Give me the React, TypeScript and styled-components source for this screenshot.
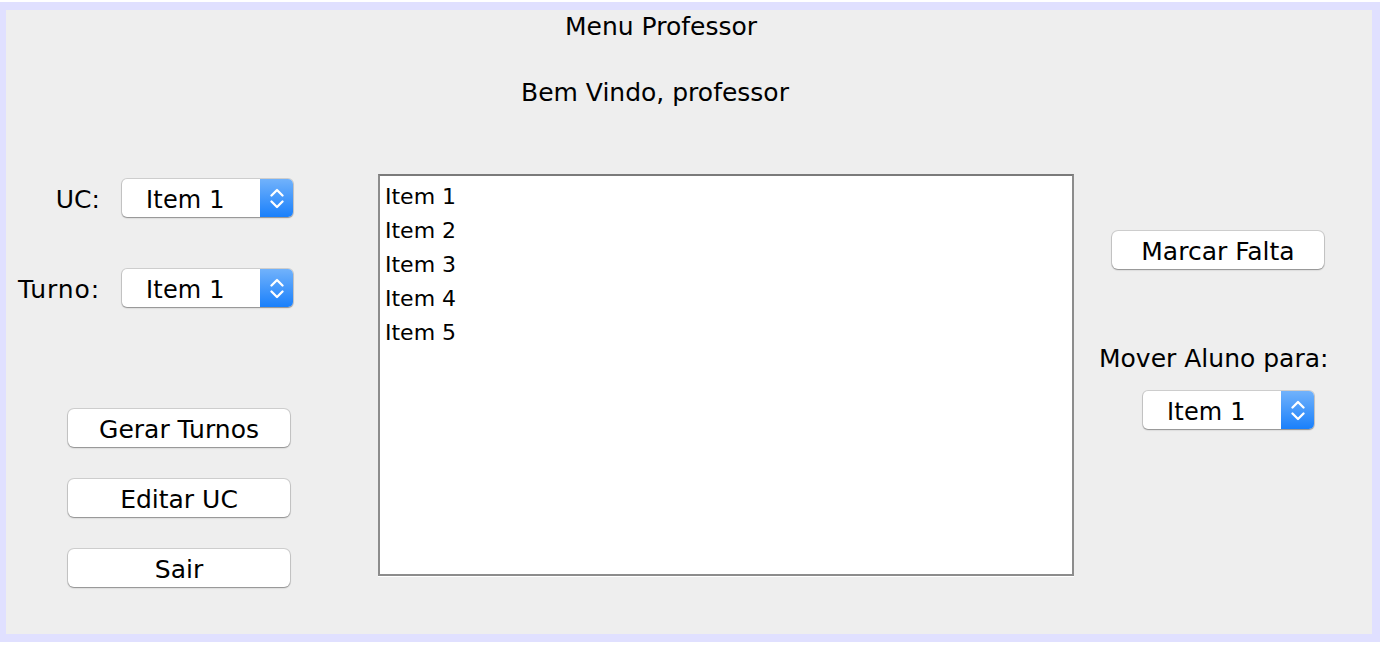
import React from "react";
import styled, { createGlobalStyle } from "styled-components";

const GlobalStyle = createGlobalStyle`
  html, body {
    margin: 0;
    padding: 0;
    background: #ffffff;
  }
  body {
    font-family: "DejaVu Sans", "Liberation Sans", sans-serif;
    color: #000;
  }
  * { box-sizing: border-box; }
`;

const Frame = styled.div`
  margin-top: 2px;
  width: 1380px;
  height: 640px;
  background: #e0e0ff;
  padding: 8px 8px 8px 6px;
`;

const Panel = styled.div`
  height: 624px;
  background: #eeeeee;
  display: flex;
  flex-direction: column;
  padding-top: 2px;
`;

const Heading = styled.div<{ $indent: number; $gap: number }>`
  font-size: 25px;
  line-height: 30px;
  white-space: nowrap;
  margin-top: ${(p) => p.$gap}px;
  padding-left: ${(p) => p.$indent}px;
`;

const Body = styled.div`
  display: flex;
  align-items: flex-start;
  margin-top: 66px;
  padding-left: 12px;
`;

const LeftColumn = styled.div`
  width: 275px;
  display: flex;
  flex-direction: column;
`;

const FormRow = styled.div<{ $gap: number }>`
  display: flex;
  align-items: baseline;
  gap: 22px;
  margin-top: ${(p) => p.$gap}px;
`;

const Label = styled.span<{ $width?: number; $tracking?: number }>`
  font-size: 25px;
  line-height: 30px;
  white-space: nowrap;
  text-align: right;
  letter-spacing: ${(p) => p.$tracking ?? 0}px;
  ${(p) => (p.$width ? `width: ${p.$width}px;` : "")}
`;

const Combo = styled.div<{ $indent?: number }>`
  display: inline-flex;
  width: 171px;
  height: 38px;
  border-radius: 5px;
  overflow: hidden;
  background: #ffffff;
  box-shadow: 0 0 0 1px rgba(0, 0, 0, 0.13), 0 1px 1.5px rgba(0, 0, 0, 0.32);
  margin-left: ${(p) => p.$indent ?? 0}px;
  flex-shrink: 0;
`;

const ComboText = styled.span`
  flex: 1;
  font-size: 24px;
  line-height: 34px;
  padding-top: 4px;
  padding-left: 24px;
  letter-spacing: 0.2px;
  white-space: nowrap;
`;

const ComboArrow = styled.span`
  width: 33px;
  display: flex;
  align-items: center;
  justify-content: center;
  background: linear-gradient(#71b2fb, #1a80fb);
`;

const ButtonStack = styled.div<{ $gap: number }>`
  display: flex;
  flex-direction: column;
  gap: 32px;
  margin-top: ${(p) => p.$gap}px;
  padding-left: 50px;
`;

const Button = styled.button<{ $width: number; $gap?: number; $indent?: number }>`
  width: ${(p) => p.$width}px;
  height: 38px;
  margin: ${(p) => p.$gap ?? 0}px 0 0 ${(p) => p.$indent ?? 0}px;
  padding: 2px 0 0;
  font-family: "DejaVu Sans", "Liberation Sans", sans-serif;
  font-size: 25px;
  line-height: 35px;
  color: #000;
  background: #ffffff;
  border: none;
  border-radius: 6px;
  box-shadow: 0 0 0 1px rgba(0, 0, 0, 0.13), 0 1px 1.5px rgba(0, 0, 0, 0.32);
  white-space: nowrap;
`;

const List = styled.ul`
  list-style: none;
  margin: 0 0 0 85px;
  width: 696px;
  height: 402px;
  padding: 4px 5px;
  background: #ffffff;
  border: 2px solid #8c8c8c;
  border-top-color: #7a7a7a;
  box-shadow: 0 1px 0 #ffffff;
  flex-shrink: 0;
`;

const ListItem = styled.li`
  font-size: 22px;
  line-height: 34px;
  white-space: nowrap;
`;

const RightColumn = styled.div`
  width: 240px;
  margin-left: 25px;
  display: flex;
  flex-direction: column;
  align-items: flex-start;
`;

const RightLabel = styled(Label)`
  margin-top: 75px;
`;

const ComboSlot = styled.div<{ $gap: number }>`
  margin-top: ${(p) => p.$gap}px;
`;

const Chevrons = () => (
  <svg width="14" height="21" viewBox="0 0 14 21" fill="none">
    <path
      d="M1.5 7.5 L7 2 L12.5 7.5"
      stroke="#ffffff"
      strokeWidth="2.3"
      strokeLinecap="round"
      strokeLinejoin="round"
    />
    <path
      d="M1.5 13.5 L7 19 L12.5 13.5"
      stroke="#ffffff"
      strokeWidth="2.3"
      strokeLinecap="round"
      strokeLinejoin="round"
    />
  </svg>
);

const ComboBox = ({ value, indent }: { value: string; indent?: number }) => (
  <Combo $indent={indent}>
    <ComboText>{value}</ComboText>
    <ComboArrow>
      <Chevrons />
    </ComboArrow>
  </Combo>
);

const items = ["Item 1", "Item 2", "Item 3", "Item 4", "Item 5"];

export default function App() {
  return (
    <>
      <GlobalStyle />
      <Frame>
        <Panel>
          <Heading $indent={559} $gap={0}>
            Menu Professor
          </Heading>
          <Heading $indent={515} $gap={36}>
            Bem Vindo, professor
          </Heading>
          <Body>
            <LeftColumn>
              <FormRow $gap={5}>
                <Label $width={82}>UC:</Label>
                <ComboBox value="Item 1" />
              </FormRow>
              <FormRow $gap={52}>
                <Label $width={82} $tracking={0.9}>
                  Turno:
                </Label>
                <ComboBox value="Item 1" />
              </FormRow>
              <ButtonStack $gap={102}>
                <Button $width={222}>Gerar Turnos</Button>
                <Button $width={222}>Editar UC</Button>
                <Button $width={222}>Sair</Button>
              </ButtonStack>
            </LeftColumn>
            <List>
              {items.map((it) => (
                <ListItem key={it}>{it}</ListItem>
              ))}
            </List>
            <RightColumn>
              <Button $width={212} $gap={57} $indent={13}>
                Marcar Falta
              </Button>
              <RightLabel>Mover Aluno para:</RightLabel>
              <ComboSlot $gap={17}>
                <ComboBox value="Item 1" indent={44} />
              </ComboSlot>
            </RightColumn>
          </Body>
        </Panel>
      </Frame>
    </>
  );
}
